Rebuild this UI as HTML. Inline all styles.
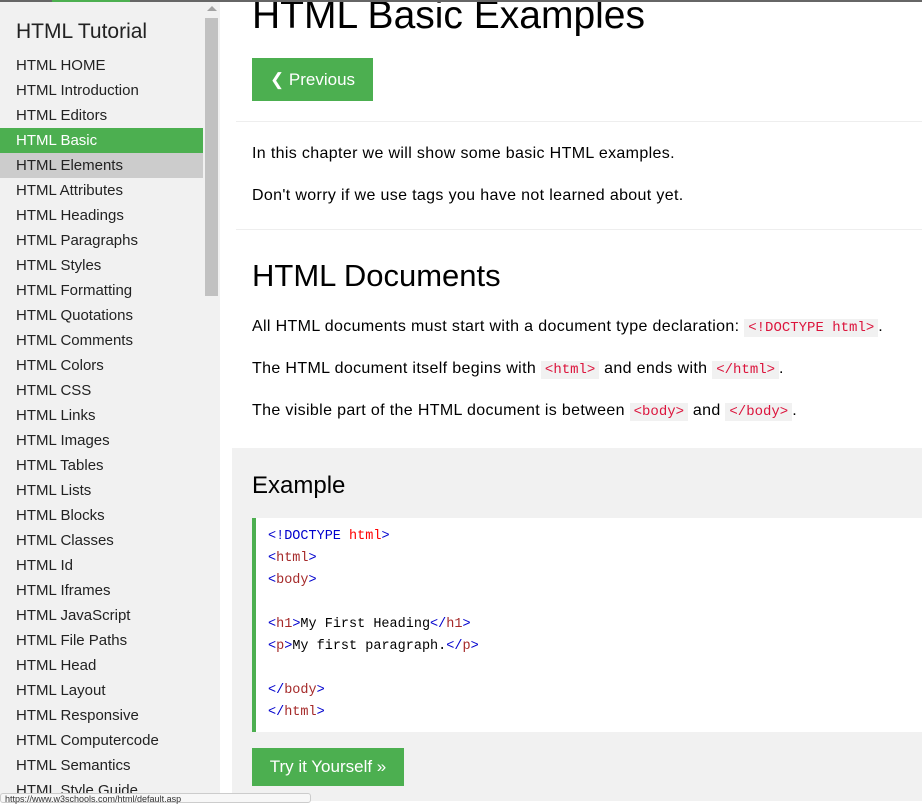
<!DOCTYPE html>
<html><head><style>
*{margin:0;padding:0;box-sizing:border-box}
body{width:922px;height:801px;overflow:hidden;background:#fff;font-family:"Liberation Sans",sans-serif;color:#000;position:relative}
#side{position:absolute;left:0;top:0;width:220px;height:801px;background:#f1f1f1}
#side h2{position:absolute;left:16px;top:20px;font-size:21px;font-weight:normal;color:#222}
#side a{position:absolute;left:0;width:203px;height:25px;line-height:25px;padding-left:16px;font-size:15px;color:#222;display:block}
#sb{position:absolute;left:205px;top:18px;width:13px;height:278px;background:#c1c1c1}
#sbu{position:absolute;left:207px;top:6px;width:0;height:0;border-left:5px solid transparent;border-right:5px solid transparent;border-bottom:5px solid #a3a3a3}
.main{position:absolute;left:252px;font-size:16px;letter-spacing:0.35px;color:#000}
.hr{position:absolute;left:236px;right:0;height:1px;background:#eee}
.btn{position:absolute;background:#4caf50;color:#fff;font-size:17px;text-align:center}
code{font-family:"Liberation Mono",monospace;font-size:14px;color:#dc143c;background:#f1f1f1;padding:1px 4px;letter-spacing:0}
#ex{position:absolute;left:232px;top:448px;right:0;bottom:0;background:#f1f1f1}
#code{position:absolute;left:252px;top:518px;right:0;height:214px;background:#fff;border-left:4px solid #4caf50;padding:8px 0 0 12px;font-family:"Liberation Mono",monospace;font-size:13.5px;line-height:22px;color:#000;white-space:pre}
.b{color:#0000cd}.t{color:#a52a2a}.r{color:#f00}
</style></head><body>
<div style="position:absolute;left:0;top:0;width:922px;height:2px;background:#666;z-index:5"></div>
<div style="position:absolute;left:52px;top:0;width:78px;height:2px;background:#4caf50;z-index:6"></div>
<div id="side">
<h2>HTML Tutorial</h2>
<a style="top:53px">HTML HOME</a>
<a style="top:78px">HTML Introduction</a>
<a style="top:103px">HTML Editors</a>
<a style="top:128px;background:#4caf50;color:#fff">HTML Basic</a>
<a style="top:153px;background:#ccc">HTML Elements</a>
<a style="top:178px">HTML Attributes</a>
<a style="top:203px">HTML Headings</a>
<a style="top:228px">HTML Paragraphs</a>
<a style="top:253px">HTML Styles</a>
<a style="top:278px">HTML Formatting</a>
<a style="top:303px">HTML Quotations</a>
<a style="top:328px">HTML Comments</a>
<a style="top:353px">HTML Colors</a>
<a style="top:378px">HTML CSS</a>
<a style="top:403px">HTML Links</a>
<a style="top:428px">HTML Images</a>
<a style="top:453px">HTML Tables</a>
<a style="top:478px">HTML Lists</a>
<a style="top:503px">HTML Blocks</a>
<a style="top:528px">HTML Classes</a>
<a style="top:553px">HTML Id</a>
<a style="top:578px">HTML Iframes</a>
<a style="top:603px">HTML JavaScript</a>
<a style="top:628px">HTML File Paths</a>
<a style="top:653px">HTML Head</a>
<a style="top:678px">HTML Layout</a>
<a style="top:703px">HTML Responsive</a>
<a style="top:728px">HTML Computercode</a>
<a style="top:753px">HTML Semantics</a>
<a style="top:778px">HTML Style Guide</a>
<div id="sb"></div><div id="sbu"></div>
</div>
<div class="main" style="top:-6px;font-size:39px;letter-spacing:0">HTML Basic Examples</div>
<div class="btn" style="left:252px;top:58px;width:121px;height:43px;line-height:43px">&#10094; Previous</div>
<div class="hr" style="top:121px"></div>
<div class="main" style="top:145px">In this chapter we will show some basic HTML examples.</div>
<div class="main" style="top:187px">Don't worry if we use tags you have not learned about yet.</div>
<div class="hr" style="top:229px"></div>
<div class="main" style="top:258px;font-size:31px;letter-spacing:0">HTML Documents</div>
<div class="main" style="top:318px">All HTML documents must start with a document type declaration: <code>&lt;!DOCTYPE html&gt;</code>.</div>
<div class="main" style="top:360px">The HTML document itself begins with <code>&lt;html&gt;</code> and ends with <code>&lt;/html&gt;</code>.</div>
<div class="main" style="top:402px">The visible part of the HTML document is between <code>&lt;body&gt;</code> and <code>&lt;/body&gt;</code>.</div>
<div id="ex"></div>
<div class="main" style="top:472px;font-size:24px;letter-spacing:0">Example</div>
<div id="code"><span class="b">&lt;!DOCTYPE</span> <span class="r">html</span><span class="b">&gt;</span>
<span class="b">&lt;</span><span class="t">html</span><span class="b">&gt;</span>
<span class="b">&lt;</span><span class="t">body</span><span class="b">&gt;</span>

<span class="b">&lt;</span><span class="t">h1</span><span class="b">&gt;</span>My First Heading<span class="b">&lt;/</span><span class="t">h1</span><span class="b">&gt;</span>
<span class="b">&lt;</span><span class="t">p</span><span class="b">&gt;</span>My first paragraph.<span class="b">&lt;/</span><span class="t">p</span><span class="b">&gt;</span>

<span class="b">&lt;/</span><span class="t">body</span><span class="b">&gt;</span>
<span class="b">&lt;/</span><span class="t">html</span><span class="b">&gt;</span></div>
<div class="btn" style="left:252px;top:748px;width:152px;height:38px;line-height:38px">Try it Yourself &raquo;</div>
<div style="position:absolute;left:0;top:793px;width:311px;height:10px;background:#f7f7f7;border:1px solid #ccc;border-radius:3px;font-size:9px;color:#333;padding-left:4px;line-height:10px">https://www.w3schools.com/html/default.asp</div>
</body></html>
